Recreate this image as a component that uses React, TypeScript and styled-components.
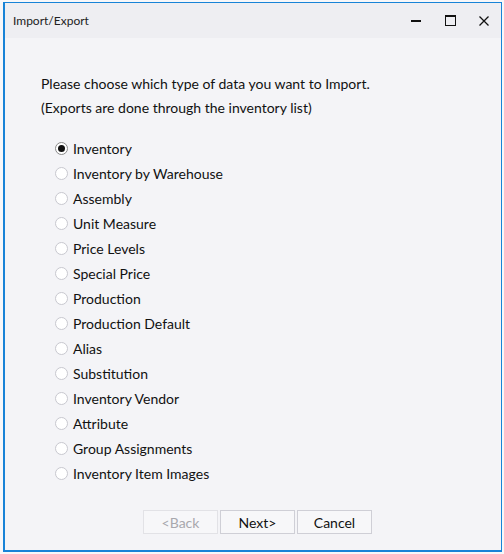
import React from 'react';
import { styled, createGlobalStyle } from 'styled-components';

const GlobalStyle = createGlobalStyle`
  html, body {
    margin: 0;
    padding: 0;
    background: #f7f7f9;
  }
  body {
    font-family: 'Segoe UI', Lato, 'Noto Sans', sans-serif;
  }
`;

const Page = styled.div`
  width: 504px;
  height: 554px;
  padding: 2px 2px 2px 3px;
  box-sizing: border-box;
`;

const Window = styled.div`
  width: 499px;
  height: 550px;
  box-sizing: border-box;
  border: 1px solid #1883d7;
  border-left-width: 2px;
  border-bottom-width: 2px;
  background: #f4f4f7;
  display: flex;
  flex-direction: column;
`;

const TitleBar = styled.div`
  height: 35px;
  display: flex;
  align-items: center;
  background: #eeeef2;
  padding-left: 8px;
`;

const Title = styled.span`
  flex: 1;
  font-size: 12px;
  color: #222;
`;

const Control = styled.div`
  width: 34px;
  height: 35px;
  display: flex;
  align-items: center;
  justify-content: center;
`;

const Body = styled.div`
  flex: 1;
  display: flex;
  flex-direction: column;
  padding: 34px 0 0 36px;
`;

const Intro = styled.p`
  margin: 0;
  font-size: 14px;
  line-height: 24px;
  color: #111;
`;

const Options = styled.div`
  display: flex;
  flex-direction: column;
  margin: 16px 0 0 14px;
`;

const Option = styled.label`
  height: 25px;
  display: flex;
  align-items: center;
  gap: 5px;
  font-size: 14px;
  color: #111;
`;

const Radio = styled.span<{ checked?: boolean }>`
  width: 13px;
  height: 13px;
  box-sizing: border-box;
  border-radius: 50%;
  border: 1px solid ${(p) => (p.checked ? '#8a8a8a' : '#c8c8cf')};
  background: #fff;
  display: flex;
  align-items: center;
  justify-content: center;

  &::after {
    content: '';
    width: 7px;
    height: 7px;
    border-radius: 50%;
    background: #111;
    display: ${(p) => (p.checked ? 'block' : 'none')};
  }
`;

const Footer = styled.div`
  display: flex;
  gap: 2px;
  margin: auto 0 16px 102px;
`;

const Button = styled.button`
  width: 75px;
  height: 24px;
  box-sizing: border-box;
  border: 1px solid #cfcfd6;
  background: #f7f7f9;
  font-family: inherit;
  font-size: 14px;
  color: #111;
  padding: 0;

  &:disabled {
    border-color: #e2e2e6;
    color: #a8a8ad;
  }
`;

const items = [
  'Inventory',
  'Inventory by Warehouse',
  'Assembly',
  'Unit Measure',
  'Price Levels',
  'Special Price',
  'Production',
  'Production Default',
  'Alias',
  'Substitution',
  'Inventory Vendor',
  'Attribute',
  'Group Assignments',
  'Inventory Item Images',
];

export default function App() {
  return (
    <Page>
      <GlobalStyle />
      <Window>
        <TitleBar>
          <Title>Import/Export</Title>
          <Control>
            <svg width="10" height="10" viewBox="0 0 10 10">
              <rect x="0" y="4" width="10" height="2" fill="#111" />
            </svg>
          </Control>
          <Control>
            <svg width="11" height="11" viewBox="0 0 11 11">
              <rect x="0.5" y="0.5" width="10" height="10" fill="none" stroke="#111" />
              <rect x="0" y="0" width="11" height="2" fill="#111" />
            </svg>
          </Control>
          <Control>
            <svg width="10" height="10" viewBox="0 0 10 10">
              <path d="M0.5 0.5 L9.5 9.5 M9.5 0.5 L0.5 9.5" stroke="#111" strokeWidth="1.3" />
            </svg>
          </Control>
        </TitleBar>
        <Body>
          <Intro>Please choose which type of data you want to Import.</Intro>
          <Intro>(Exports are done through the inventory list)</Intro>
          <Options>
            {items.map((item, i) => (
              <Option key={item}>
                <Radio checked={i === 0} />
                {item}
              </Option>
            ))}
          </Options>
          <Footer>
            <Button disabled>&lt;Back</Button>
            <Button>Next&gt;</Button>
            <Button>Cancel</Button>
          </Footer>
        </Body>
      </Window>
    </Page>
  );
}
